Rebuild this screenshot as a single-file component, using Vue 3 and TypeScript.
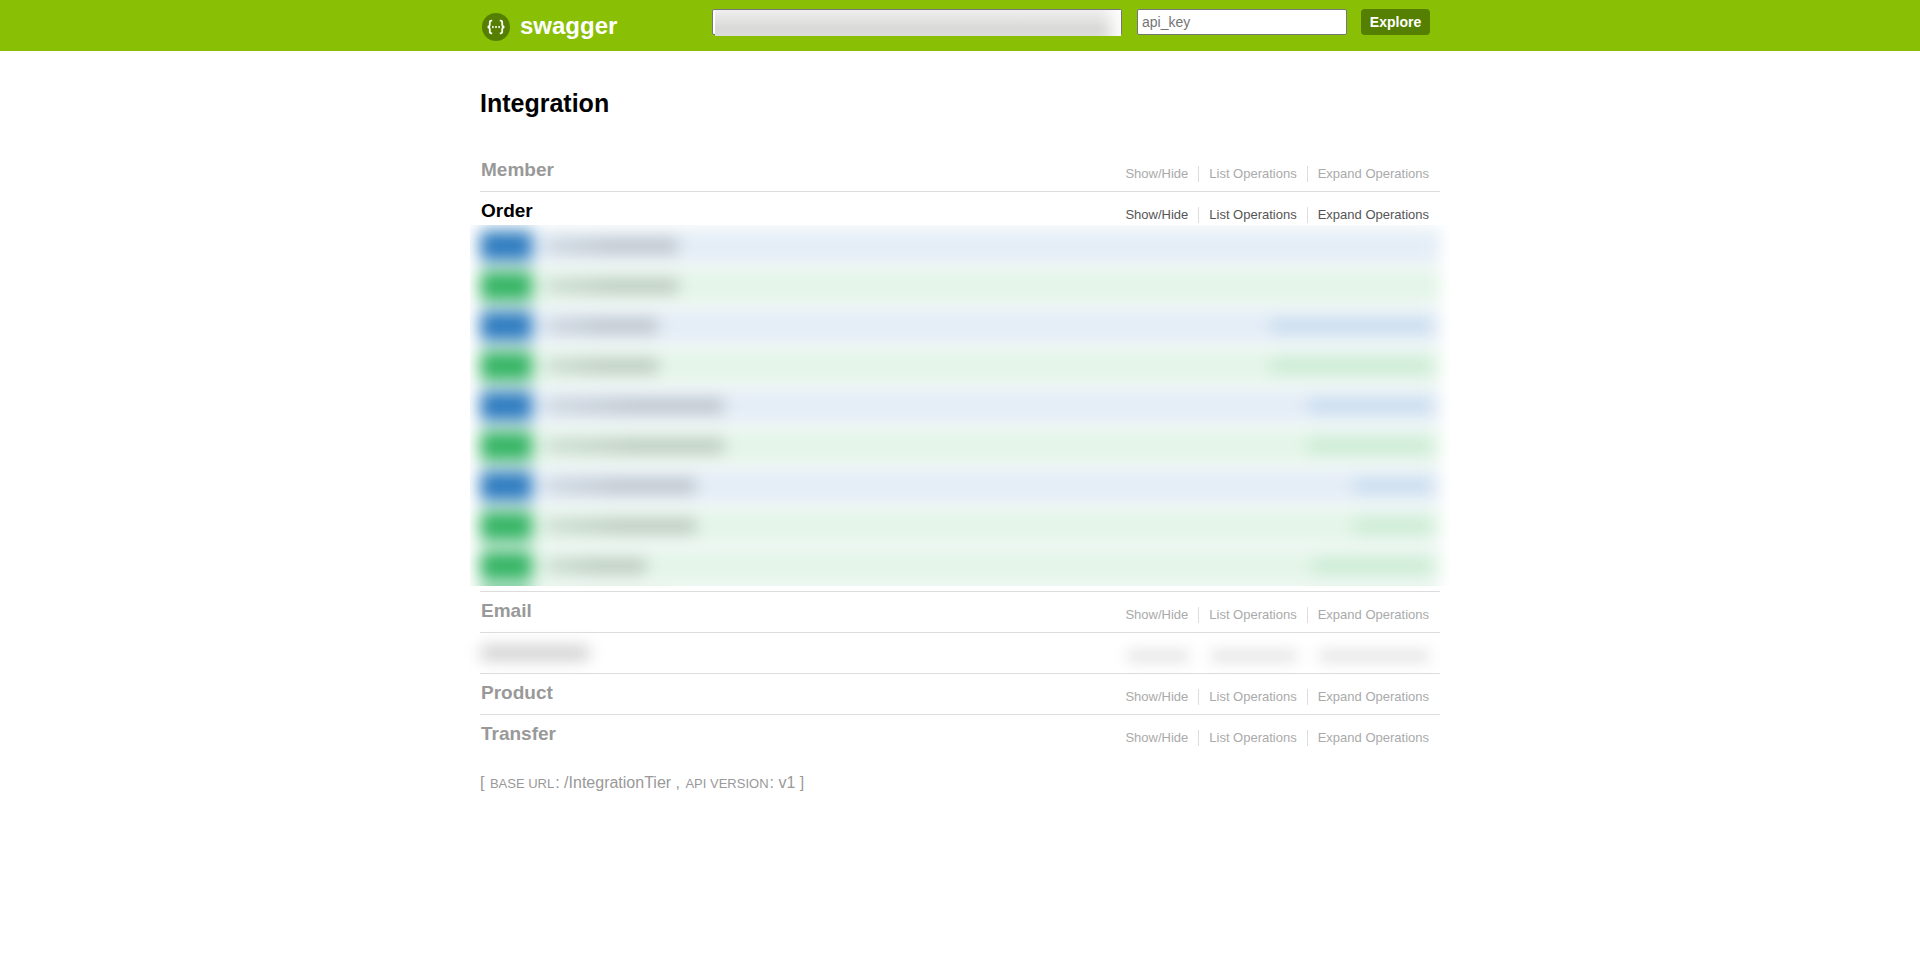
<script setup lang="ts">
interface Operation {
  method: 'get' | 'post'
  path: number
  note: number
}

interface Resource {
  name: string
  active?: boolean
  masked?: boolean
  operations?: Operation[]
}

const actions: string[] = ['Show/Hide', 'List Operations', 'Expand Operations']

const resources: Resource[] = [
  { name: 'Member' },
  {
    name: 'Order',
    active: true,
    operations: [
      { method: 'get', path: 132, note: 0 },
      { method: 'post', path: 132, note: 0 },
      { method: 'get', path: 112, note: 162 },
      { method: 'post', path: 112, note: 162 },
      { method: 'get', path: 178, note: 124 },
      { method: 'post', path: 178, note: 124 },
      { method: 'get', path: 150, note: 78 },
      { method: 'post', path: 150, note: 78 },
      { method: 'post', path: 100, note: 120 },
      { method: 'post', path: 120, note: 120 },
    ],
  },
  { name: 'Email' },
  { name: '', masked: true },
  { name: 'Product' },
  { name: 'Transfer' },
]
</script>

<template>
  <div class="page">
    <header class="header">
      <div class="wrap bar">
        <a class="logo" href="#">
          <svg width="28" height="28" viewBox="0 0 28 28" aria-hidden="true">
            <circle cx="14" cy="14" r="14" fill="#547f00" />
            <g fill="none" stroke="#fff" stroke-width="1.8">
              <path d="M10.2 7.6H9.5C8.2 7.6 7.8 8.3 7.8 9.4V11.6C7.8 13 7.2 13.9 5.6 14C7.2 14.1 7.8 15 7.8 16.4V18.6C7.8 19.7 8.2 20.4 9.5 20.4H10.2" />
              <path d="M17.8 7.6H18.5C19.8 7.6 20.2 8.3 20.2 9.4V11.6C20.2 13 20.8 13.9 22.4 14C20.8 14.1 20.2 15 20.2 16.4V18.6C20.2 19.7 19.8 20.4 18.5 20.4H17.8" />
            </g>
            <g fill="#fff">
              <circle cx="10.9" cy="14" r="1" />
              <circle cx="14" cy="14" r="1" />
              <circle cx="17.1" cy="14" r="1" />
            </g>
          </svg>
          <span>swagger</span>
        </a>
        <form class="selector" @submit.prevent>
          <div class="url">
            <input type="text" aria-label="Specification URL" />
            <div class="url-mask"><i></i></div>
          </div>
          <input class="key" type="text" placeholder="api_key" aria-label="API key" />
          <button type="submit">Explore</button>
        </form>
      </div>
    </header>

    <main class="wrap main">
      <h1>Integration</h1>
      <ul class="resources">
        <li v-for="(r, i) in resources" :key="i" :class="{ active: r.active }">
          <div v-if="r.masked" class="heading masked">
            <i class="mask-name"></i>
            <div class="mask-links"><i></i><i></i><i></i></div>
          </div>
          <div v-else class="heading">
            <h2><a href="#">{{ r.name }}</a></h2>
            <ul class="options">
              <li v-for="a in actions" :key="a"><a href="#">{{ a }}</a></li>
            </ul>
          </div>
          <div v-if="r.operations" class="endpoints">
            <div class="haze">
              <div v-for="(o, k) in r.operations" :key="k" class="op" :class="o.method">
                <i class="method"></i>
                <i class="path" :style="{ width: o.path + 'px' }"></i>
                <i class="note" :style="{ width: o.note + 'px' }"></i>
              </div>
            </div>
          </div>
        </li>
      </ul>
      <footer>
        [ <span class="caps">base url</span>: /IntegrationTier , <span class="caps">api version</span>: v1 ]
      </footer>
    </main>
  </div>
</template>

<style>
body {
  margin: 0;
  background: #fff;
}
</style>

<style scoped>
.page {
  font-family: "Liberation Sans", Arial, sans-serif;
}
a {
  color: inherit;
  text-decoration: none;
}
ul {
  list-style: none;
  margin: 0;
  padding: 0;
}
.wrap {
  box-sizing: border-box;
  max-width: 960px;
  margin: 0 auto;
}
.header {
  background: #89bf04;
}
.bar {
  display: flex;
  justify-content: space-between;
  align-items: flex-start;
  padding: 9px 10px 16px 0;
}
.logo {
  display: flex;
  align-items: flex-start;
  gap: 10px;
  height: 26px;
  padding: 4px 0 0 2px;
  box-sizing: border-box;
  color: #fff;
  font-size: 24px;
  font-weight: bold;
}
.logo span {
  line-height: 26px;
}
.selector {
  display: flex;
}
.selector input {
  box-sizing: border-box;
  height: 26px;
  margin: 0;
  padding: 3px 4px;
  border: 1px solid #767676;
  border-radius: 2px;
  background: #fff;
  font: 14px "Liberation Sans", Arial, sans-serif;
}
.selector input::placeholder {
  color: #757575;
}
.url {
  position: relative;
  width: 410px;
  margin-right: 15px;
}
.url input {
  width: 100%;
}
.url-mask {
  position: absolute;
  inset: 1px 1px -1px 3px;
  overflow: hidden;
  background: linear-gradient(#efefef, #d9d9d7 70%, #dcdcda);
}
.url-mask i {
  display: block;
  width: 24px;
  height: 50px;
  margin: -14px -14px 0 auto;
  background: #fff;
  filter: blur(8px);
}
.selector .key {
  width: 210px;
  margin-right: 14px;
}
.selector button {
  width: 69px;
  height: 26px;
  padding: 0;
  border: 0;
  border-radius: 4px;
  background: #547f00;
  color: #fff;
  font: bold 14px "Liberation Sans", Arial, sans-serif;
}
.main {
  padding-top: 37px;
}
h1 {
  margin: 0 0 35px;
  font-size: 25px;
  line-height: 30px;
}
.resources > li {
  border-bottom: 1px solid #ddd;
}
.resources > li:last-child {
  border-bottom: 0;
}
.heading {
  display: flex;
  justify-content: space-between;
  height: 40px;
  padding: 0 11px 0 1px;
  box-sizing: border-box;
  color: #999;
}
.resources > li:first-child .heading {
  height: 38px;
}
.resources > li:first-child h2 {
  padding-top: 6px;
}
.resources > li:first-child .options {
  padding-top: 13px;
}
h2 {
  margin: 0;
  padding-top: 8px;
  font-size: 19px;
  line-height: 22px;
}
.options {
  display: flex;
  align-items: flex-start;
  padding-top: 15px;
  color: #aaa;
  font-size: 13px;
  line-height: 16px;
}
.options li + li {
  margin-left: 10px;
  padding-left: 10px;
  border-left: 1px solid #ddd;
}
.active .heading {
  height: 33px;
  color: #000;
}
.active .options {
  color: #555;
}
.endpoints {
  height: 361px;
  margin: 0 -10px 5px;
  overflow: hidden;
}
.haze {
  margin-top: -34px;
  padding: 40px 10px;
  filter: blur(8px);
}
.op {
  display: flex;
  align-items: center;
  height: 30px;
  margin-bottom: 10px;
  box-shadow: 0 5px #f3f9f8, 0 -5px #f3f9f8;
}
.method {
  width: 52px;
  height: 30px;
  border-radius: 3px;
}
.path {
  height: 14px;
  margin: 0 auto 0 14px;
  background: linear-gradient(90deg, #0008, #000 50%);
  opacity: 0.19;
}
.note {
  height: 14px;
  margin-right: 8px;
  opacity: 0.16;
}
.get {
  background: #e4edf7;
}
.get .method,
.get .note {
  background: #2f7dc0;
}
.post {
  background: #e4f5e8;
}
.post .method,
.post .note {
  background: #36b565;
}
.masked {
  align-items: center;
}
.mask-name {
  width: 108px;
  height: 14px;
  background: #ccc;
  filter: blur(8px);
}
.mask-links {
  display: flex;
  gap: 22px;
  padding-top: 5px;
}
.mask-links i {
  width: 62px;
  height: 12px;
  background: #e4e4e4;
  filter: blur(7px);
}
.mask-links i + i {
  width: 86px;
}
.mask-links i:last-child {
  width: 110px;
}
footer {
  padding-top: 18px;
  color: #999;
  font-size: 16px;
  line-height: 20px;
}
.caps {
  margin: 0 1px;
  font-size: 13px;
  text-transform: uppercase;
}
</style>
